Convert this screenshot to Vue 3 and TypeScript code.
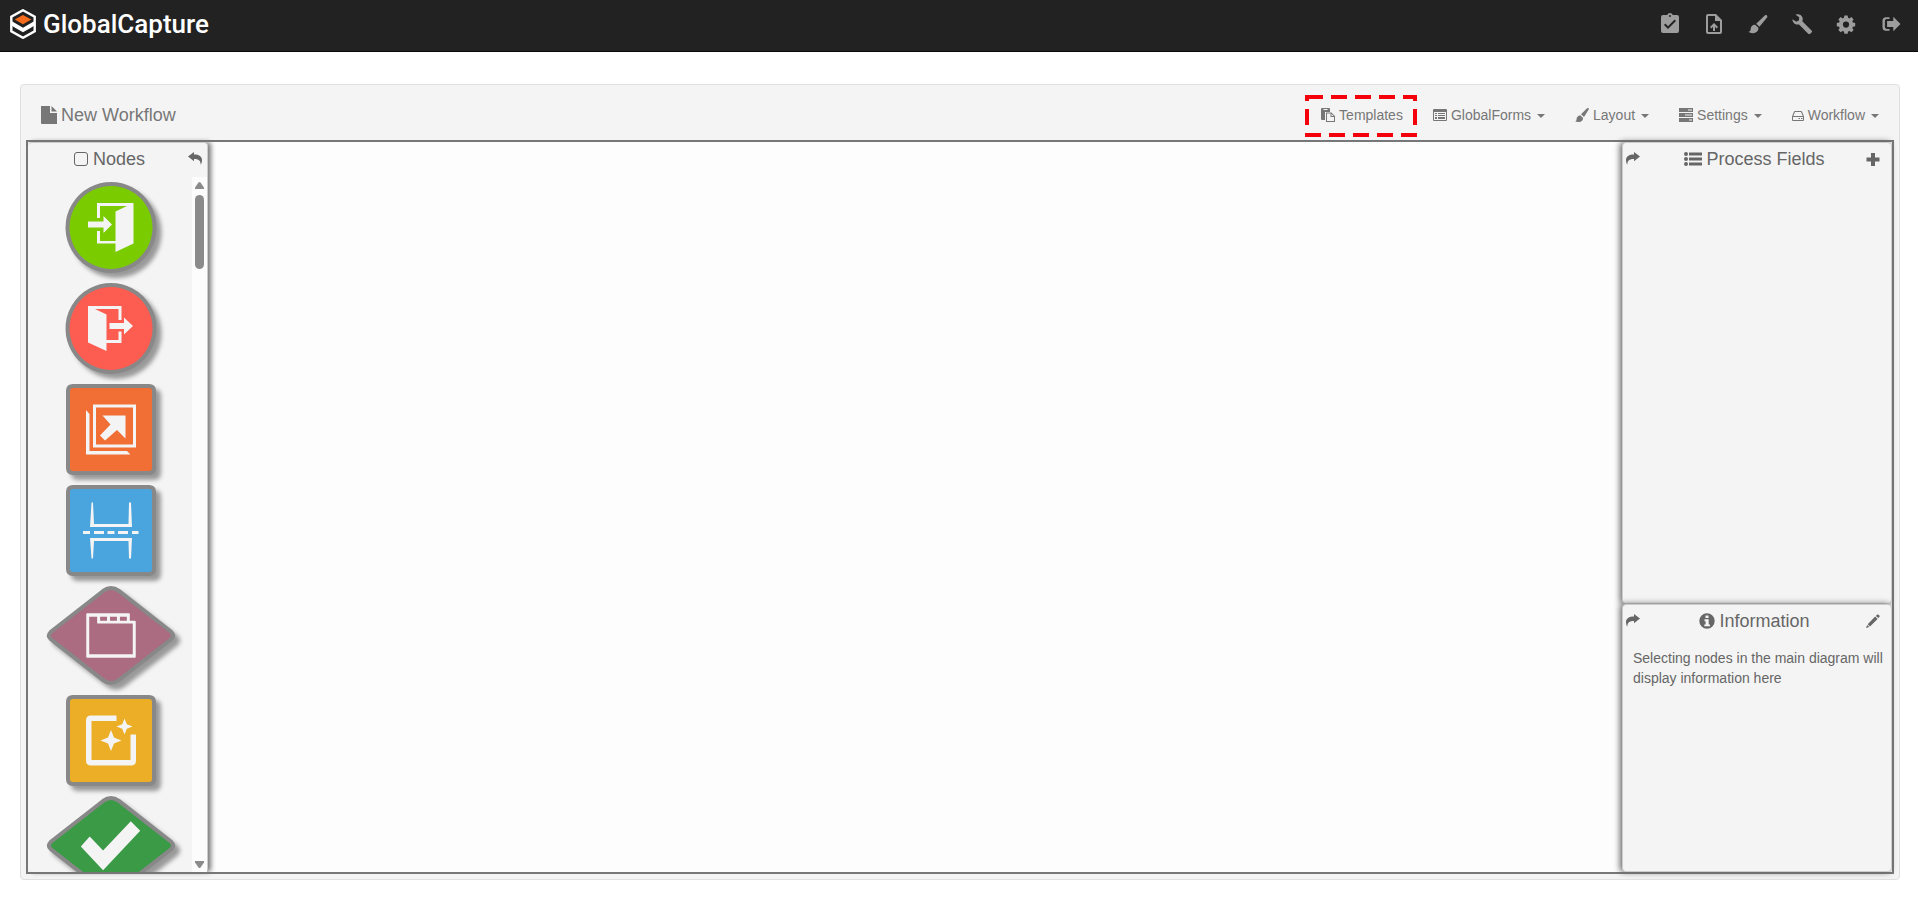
<script setup lang="ts">
import { ref } from 'vue'

interface Tool { id: string; label: string; path: string }
interface Menu { id: string; label: string; width: number; path: string; caret: boolean; marked: boolean }
interface FlowNode { id: string; label: string; shape: 'circle' | 'square' | 'diamond'; fill: string; path: string }

const CIRCLE = 'M65 2a43.5 43.5 0 1 0 .01 0Z'
const SQUARE = 'M27 2H103Q108 2 108 7V84Q108 89 103 89H27Q22 89 22 84V7Q22 2 27 2Z'
const DIAMOND = 'M57 5Q65 -1 73 5L126 46.500Q129.500 50 126 53.500L73 95Q65 101 57 95L4 53.500Q.5 50 4 46.500Z'
const shapes = { circle: CIRCLE, square: SQUARE, diamond: DIAMOND }

const tools: Tool[] = [
  { id: 'tasks', label: 'Tasks', path: 'M19 3h-4.200a3 3 0 0 0-5.600 0H5a2 2 0 0 0-2 2v14a2 2 0 0 0 2 2h14a2 2 0 0 0 2-2V5a2 2 0 0 0-2-2zm-7 0a1 1 0 1 1 0 2 1 1 0 0 1 0-2zm-2 14-4-4 1.400-1.400L10 14.200l6.600-6.600L18 9z' },
  { id: 'upload', label: 'Upload', path: 'M14 2H6a2 2 0 0 0-2 2v16a2 2 0 0 0 2 2h12a2 2 0 0 0 2-2V8zm4 18H6V4h7v5h5zM8 15l1.400 1.400L11 14.800V19h2v-4.200l1.600 1.600L16 15l-4-4z' },
  { id: 'design', label: 'Design', path: 'M20.300 3c1 .4 1.400 1.500.8 2.400l-7.700 9.400-3.200-3L19 3.300c.4-.3.800-.4 1.300-.3zM9.200 12.800l3.200 3c.3 3.500-2.500 5.400-5.400 5.400-2.200 0-3.700-.6-4.500-1.400 2.500-.3 1.900-2 2.300-3.800.5-2.200 2.200-3.500 4.400-3.200z' },
  { id: 'configure', label: 'Configure', path: 'M2.400 7.200 6.400 9.800 9 8.200 9.200 5.200 5.600 2.800C8.300 1.600 11.600 2.800 12.500 5.600c.4 1.300.3 2.500-.2 3.600l9.200 9.200c.8.800.8 1.300 0 2l-1.300 1.300c-.7.600-1.300.6-2 0l-9.200-9.300c-3.200 1-6.400-1.500-6.600-5.200z' },
  { id: 'settings', label: 'Settings', path: 'M10.400 3.500h3.200l.5 2.300 1.300.6 2-1.300 2.200 2.300-1.300 1.900.6 1.300 2.300.5v3.100l-2.300.5-.6 1.300 1.300 2-2.200 2.200-2-1.300-1.300.5-.5 2.400h-3.200l-.5-2.400-1.300-.5-2 1.300-2.200-2.200 1.300-2-.6-1.300-2.300-.5v-3.100l2.300-.5.6-1.300-1.300-1.900 2.200-2.300 2 1.300 1.300-.6zM12 9.500a3.100 3.100 0 1 0 0 6.200 3.100 3.100 0 0 0 0-6.200z' },
  { id: 'logout', label: 'Log out', path: 'M11.500 5.200v1.900H8.700q-1.800 0-1.800 1.800v6.200q0 1.800 1.800 1.800h2.800v1.900H8Q4.500 18.800 4.500 15.300V8.700Q4.500 5.200 8 5.200zM15.300 4.800 22.500 12l-7.200 7.200v-4.300H9.100V9.100h6.200z' }
]

const menus: Menu[] = [
  { id: 'templates', label: 'Templates', width: 14, caret: false, marked: true, path: 'M1 0H8Q9 0 9 1V4H4V12H1Q0 12 0 11V1Q0 0 1 0ZM2.500 1V2H6.500V1ZM5 4.500H10.500L14 8V14H5ZM6 5.500V13H13V9H9.500V5.500ZM10.500 5.800V8H12.700Z' },
  { id: 'forms', label: 'GlobalForms', width: 14, caret: true, marked: false, path: 'M1 1H13Q14 1 14 2V12Q14 13 13 13H1Q0 13 0 12V2Q0 1 1 1ZM1 4V12H13V4ZM2 5H4V6H2ZM5 5H12V6H5ZM2 7H4V8H2ZM5 7H12V8H5ZM2 9H4V11H2ZM5 9H12V11H5Z' },
  { id: 'layout', label: 'Layout', width: 14, caret: true, marked: false, path: 'M12.800 0Q14.500 0 13.700 1.500L9 9 6 6.200 11.800.5ZM5.300 7.200 8.100 9.900C8 13 5.500 14 3.500 14Q1 14 0 13C2 13 1.300 11.500 1.800 9.800Q2.800 7.200 5.300 7.200Z' },
  { id: 'settings', label: 'Settings', width: 14, caret: true, marked: false, path: 'M0 0H14V4H0ZM9 1.500V2.500H13V1.500ZM0 5H14V9H0ZM6 6.500V7.500H13V6.500ZM0 10H14V14H0ZM10 11.500V12.500H13V11.500Z' },
  { id: 'workflow', label: 'Workflow', width: 12, caret: true, marked: false, path: 'M3 3H9Q9.800 3 10.100 3.800L12 8.500V12Q12 13 11 13H1Q0 13 0 12V8.500L1.900 3.800Q2.200 3 3 3ZM3 4 1.300 8H10.700L9 4ZM1 9V12H11V9ZM6.500 10H8V11H6.500ZM9 10H10.500V11H9Z' }
]

const nodes: FlowNode[] = [
  { id: 'start', label: 'Import', shape: 'circle', fill: '#7acb00', path: 'M42 39.500H57.500V34L66 42.500 57.500 51V45.500H42ZM51 21H87.500V61.500L69.500 70V61.500H51V49H54V59H69.500V29.500L81 24H54V36H51Z' },
  { id: 'end', label: 'Export', shape: 'circle', fill: '#fd5c50', path: 'M42 23H75.500V37H72.500V26H49L60.500 31.500V57H72.500V48.500H75.500V60H60.500V68L42 59.500ZM63.500 40H78V34.500L87 43 78 51.500V46H63.500Z' },
  { id: 'launch', label: 'Launch', shape: 'square', fill: '#f16f35', path: 'M47 20.500H90V63.500H47ZM50 23.500V60.500H87V23.500ZM40 26 43.500 30V67H61L64 67H81L84.500 70.500H40ZM56.500 31.500H79.500V54.500L71 46 59 56.500 54 51.500 64.500 40.500Z' },
  { id: 'split', label: 'Separate', shape: 'square', fill: '#4aa4dd', path: 'M45.500 17.500H47L48 39H82.500L83 17.500H85L86 42H44ZM44 53H86L85 73.500H83L82.500 56H48L47 73.500H45.500ZM37 46H44V49H37ZM48 46H58V49H48ZM61.500 46H68.500V49H61.500ZM72 46H82V49H72ZM86 46H92.500V49H86Z' },
  { id: 'classify', label: 'Classify', shape: 'diamond', fill: '#ab6b80', path: 'M41 27.500H83Q84 27.500 84 28.500V35H89Q90 35 90 36V71.500Q90 72.500 89 72.500H41Q40 72.500 40 71.500V28.500Q40 27.500 41 27.500ZM43 31V69H87V38H52Q51 38 51 37V31ZM54 31V35H61V31ZM64 31V35H71V31ZM74 31V35H81V31Z' },
  { id: 'enhance', label: 'Enhance', shape: 'square', fill: '#ebae26', path: 'M45 20.500H70.500V26H45.500V65H84.500V39.500H90V65.500Q90 70.500 85 70.500H45Q40 70.500 40 65.500V25.500Q40 20.500 45 20.500ZM65 35 68 42.500 75.500 45.500 68 48.500 65 56 62 48.500 54.500 45.500 62 42.500ZM78.500 23.500 80.800 29.200 86.500 31.500 80.800 33.800 78.500 39.500 76.200 33.800 70.500 31.500 76.200 29.200Z' },
  { id: 'validate', label: 'Validate', shape: 'diamond', fill: '#3a9a45', path: 'M43.500 41 57 55 85 25.500 94.500 35 57 75 34.500 51Z' }
]

const selectAll = ref(false)
</script>

<template>
  <div class="page">
    <header class="topbar">
      <a class="brand" href="#">
        <svg width="26" height="30" viewBox="0 0 26 30" aria-hidden="true">
          <path d="M13 1.200 24.700 7.800V22.200L13 28.800 1.300 22.200V7.800Z" fill="#222" stroke="#fff" stroke-width="2.400" />
          <path d="M13 6 21.300 10.600 13 15.200 4.700 10.600Z" fill="#f76b1c" />
          <path d="M1.500 12 13 18.700 24.500 12V16.500L20.500 19 13 23.300 5.500 19 1.500 16.500Z" fill="#fff" />
        </svg>
        <span>GlobalCapture</span>
      </a>
      <nav class="tools">
        <button v-for="t in tools" :key="t.id" type="button" :aria-label="t.label">
          <svg width="24" height="24" viewBox="0 0 24 24"><path :d="t.path" fill-rule="evenodd" /></svg>
        </button>
      </nav>
    </header>

    <main class="card">
      <div class="card-head">
        <h1>
          <svg width="16" height="18" viewBox="0 0 16 18" aria-hidden="true"><path d="M0 0H9V7H16V18H1Q0 18 0 17ZM10.500 0 16 5.500H10.500Z" /></svg>
          New Workflow
        </h1>
        <nav class="menus">
          <button v-for="m in menus" :key="m.id" type="button">
            <svg :width="m.width" height="14" :viewBox="`0 0 ${m.width} 14`" aria-hidden="true"><path :d="m.path" fill-rule="evenodd" /></svg>
            <span>{{ m.label }}</span>
            <i v-if="m.caret" class="caret"></i>
            <svg v-if="m.marked" class="marker" width="112" height="42" viewBox="0 0 112 42" aria-hidden="true">
              <path d="M0 0H18V4H4V6H0ZM26 0H42V4H26ZM50 0H66V4H50ZM74 0H90V4H74ZM98 0H112V6H108V4H98ZM0 14H4V30H0ZM108 14H112V30H108ZM0 38H16V42H0ZM24 38H40V42H24ZM48 38H64V42H48ZM72 38H88V42H72ZM96 38H112V42H96Z" />
            </svg>
          </button>
        </nav>
      </div>

      <div class="workspace">
        <aside class="panel node-panel">
          <div class="panel-head">
            <h2>
              <label><input v-model="selectAll" type="checkbox" />Nodes</label>
            </h2>
            <button type="button" aria-label="Collapse nodes">
              <svg width="14" height="14" viewBox="0 0 14 14"><path d="M0 4.500 6 0V2.600C11 2.600 14 4.600 14 8.200Q14 10.500 12.700 12.700C12.700 8.500 10.500 7 6 7V9.300Z" /></svg>
            </button>
          </div>
          <div class="node-scroll">
            <ul>
              <li v-for="n in nodes" :key="n.id">
                <svg width="130" :height="n.shape === 'diamond' ? 99 : 91" :viewBox="n.shape === 'diamond' ? '0 0 130 100' : '0 0 130 91'" role="img" :aria-label="n.label">
                  <path :d="shapes[n.shape]" :fill="n.fill" stroke="#888" stroke-width="4" />
                  <path :d="n.path" fill="#f4f4f4" fill-rule="evenodd" />
                </svg>
              </li>
            </ul>
            <div class="bar">
              <svg width="9" height="7" viewBox="0 0 9 7"><path d="M3.500.5Q4.500-.5 5.500.5L9 5.500V7H0V5.500Z" /></svg>
              <div class="track"><div class="thumb"></div></div>
              <svg width="9" height="7" viewBox="0 0 9 7"><path d="M0 0H9V1.500L5.500 6.500Q4.500 7.500 3.500 6.500L0 1.500Z" /></svg>
            </div>
          </div>
        </aside>

        <section class="canvas"></section>

        <div class="side">
          <section class="panel fields">
            <div class="panel-head">
              <button type="button" aria-label="Collapse process fields">
                <svg width="14" height="14" viewBox="0 0 14 14"><path d="M14 4.500 8 0V2.600C3 2.600 0 4.600 0 8.200Q0 10.500 1.300 12.700C1.300 8.500 3.500 7 8 7V9.300Z" /></svg>
              </button>
              <h2>
                <svg width="18" height="14" viewBox="0 0 18 14" aria-hidden="true"><path d="M5 .5H18V3.500H5ZM5 5.500H18V8.500H5ZM5 10.500H18V13.500H5Z" /><circle cx="2" cy="2" r="2" /><circle cx="2" cy="7" r="2" /><circle cx="2" cy="12" r="2" /></svg>
                Process Fields
              </h2>
              <button type="button" aria-label="Add field">
                <svg width="14" height="14" viewBox="0 0 14 14"><path d="M5 1H9V5.500H13.500V9.500H9V14H5V9.500H.5V5.500H5Z" /></svg>
              </button>
            </div>
          </section>
          <section class="panel info">
            <div class="panel-head">
              <button type="button" aria-label="Collapse information">
                <svg width="14" height="14" viewBox="0 0 14 14"><path d="M14 4.500 8 0V2.600C3 2.600 0 4.600 0 8.200Q0 10.500 1.300 12.700C1.300 8.500 3.500 7 8 7V9.300Z" /></svg>
              </button>
              <h2>
                <svg width="16" height="16" viewBox="0 0 16 16" aria-hidden="true"><path fill-rule="evenodd" d="M8 .3A7.700 7.700 0 1 0 8 15.700 7.700 7.700 0 0 0 8 .3ZM6.500 2.500H9.500V5H6.500ZM5.500 6.300H9.700V11.500H11V13.300H5.300V11.500H6.600V8.200H5.500Z" /></svg>
                Information
              </h2>
              <button type="button" aria-label="Edit information">
                <svg width="14" height="14" viewBox="0 0 14 14"><path d="M11 .8Q11.800 0 12.600.8L13.400 1.600Q14 2.300 13.400 3L12.300 4.100 9.900 1.900ZM9.200 2.600 11.600 4.900 4 12.400 1.700 10.200ZM1.200 10.900 3.300 12.900 0 14Z" /></svg>
              </button>
            </div>
            <p>Selecting nodes in the main diagram will display information here</p>
          </section>
        </div>
      </div>
    </main>
  </div>
</template>

<style>
body {
  background: #fff;
}
</style>

<style scoped>
.page {
  font-family: "Liberation Sans", Arial, sans-serif;
  font-size: 14px;
  line-height: 20px;
  color: #666;
}
.page *,
.page {
  box-sizing: border-box;
}
button {
  position: relative;
  border: 0;
  padding: 0;
  background: none;
  font: inherit;
  color: inherit;
  cursor: pointer;
}
svg {
  display: block;
  flex: none;
  fill: currentColor;
}
h1,
h2 {
  display: flex;
  align-items: center;
  margin: 0;
  font-size: 18px;
  line-height: 20px;
  font-weight: 400;
}
.topbar {
  display: flex;
  justify-content: space-between;
  height: 52px;
  padding: 0 6px 0 10px;
  background: #222;
  border-bottom: 1px solid #080808;
}
.brand {
  display: flex;
  align-items: center;
  gap: 7px;
  padding-bottom: 3px;
  color: #fff;
  font: 500 26px/30px Roboto, sans-serif;
  text-decoration: none;
}
.tools {
  display: flex;
  color: #9d9d9d;
}
.tools button {
  display: flex;
  align-items: center;
  justify-content: center;
  width: 44px;
  padding-bottom: 3px;
}
.card {
  margin: 32px 18px 0 20px;
  padding: 0 5px 5px;
  background: #f4f4f4;
  border: 1px solid #e0e0e0;
  border-radius: 4px;
}
.card-head {
  display: flex;
  align-items: center;
  justify-content: space-between;
  height: 55px;
  padding: 5px 0 0 15px;
  color: #777;
}
.card-head h1 {
  gap: 4px;
}
.menus {
  display: flex;
}
.menus button {
  display: flex;
  align-items: center;
  gap: 4px;
  padding: 0 15px;
}
.caret {
  margin: 2px 0 0 2px;
  border-top: 4px solid;
  border-left: 4px solid transparent;
  border-right: 4px solid transparent;
}
.marker {
  position: absolute;
  top: -10px;
  left: -1px;
  color: #f5000a;
}
.workspace {
  display: flex;
  height: calc(100vh - 170px);
  min-height: 400px;
  border: 2px solid #777;
  background: #fdfdfd;
}
.panel {
  display: flex;
  flex-direction: column;
  background: #f4f4f4;
  border: 1px solid #ccc;
  border-radius: 4px;
}
.node-panel {
  width: 180px;
  border-left: 0;
  border-bottom: 0;
  box-shadow: 3px 0 5px #777;
}
.canvas {
  flex: 1;
}
.side {
  display: flex;
  flex-direction: column;
  width: 270px;
}
.side .panel {
  box-shadow: -2px 0 6px #666;
}
.fields {
  flex: 463 1 0;
}
.info {
  flex: 267 1 0;
}
.panel-head {
  display: flex;
  align-items: center;
  flex: none;
  height: 34px;
  padding: 0 11px 2px 3px;
}
.node-panel .panel-head {
  padding: 0 5px 2px 0;
}
.panel-head h2 {
  flex: 1;
  justify-content: center;
  gap: 4px;
  padding-left: 3px;
}
.panel-head label {
  display: flex;
  align-items: center;
  gap: 5px;
}
.panel-head input {
  appearance: none;
  width: 14px;
  height: 14px;
  margin: 0;
  border: 1px solid #666;
  border-radius: 3px;
}
.panel-head input:checked {
  background: #666;
}
.node-scroll {
  display: flex;
  flex: 1;
  min-height: 0;
  overflow: hidden;
}
.node-scroll ul {
  display: flex;
  flex: 1;
  flex-direction: column;
  align-items: center;
  gap: 10px;
  margin: 0;
  padding: 5px 0 0 1px;
  list-style: none;
}
.node-scroll li svg {
  overflow: visible;
  filter: drop-shadow(5px 5px 2px #999);
}
.bar {
  display: flex;
  flex-direction: column;
  align-items: center;
  gap: 6px;
  width: 15px;
  padding: 5px 0 4px;
  background: #fcfcfc;
  color: #8b8b8b;
}
.track {
  flex: 1;
}
.thumb {
  width: 9px;
  height: 74px;
  border-radius: 5px;
  background: #8b8b8b;
}
.info p {
  margin: 0;
  padding: 9px 0 0 10px;
}
</style>
